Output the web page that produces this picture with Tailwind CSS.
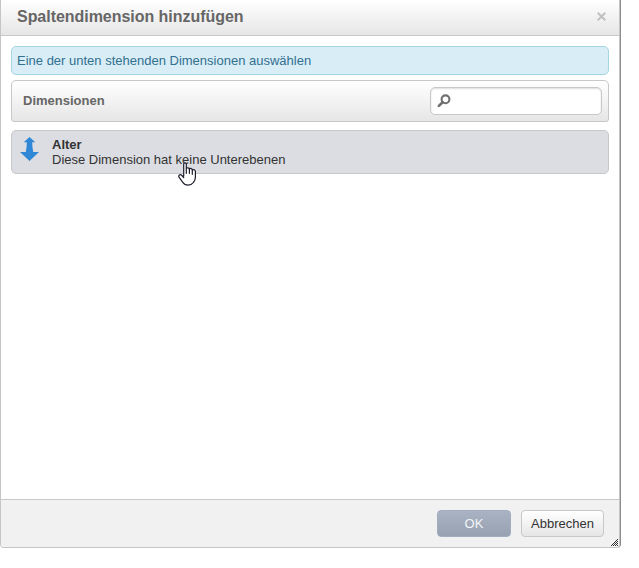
<!DOCTYPE html>
<html lang="de">
<head>
<meta charset="utf-8">
<title>Spaltendimension hinzufügen</title>
<script src="https://cdn.jsdelivr.net/npm/@tailwindcss/browser@4"></script>
</head>
<body class="h-[568px] overflow-hidden bg-white font-['Liberation_Sans',Arial,sans-serif] text-[13px] leading-[15px] text-[#333]">
<div class="h-[548px] w-[621px] rounded-b-[4px] border-r border-[#8c8c8c]">
<div class="relative flex h-[548px] w-[620px] flex-col rounded-b-[4px] border-x border-b border-[#c5c5c5] bg-white">
  <header class="flex h-9 shrink-0 items-center justify-between border-b border-[#c8c8c8] bg-linear-to-b from-white to-[#e6e6e6] pr-[13px] pl-4">
    <h1 class="pb-[1px] text-[16px] leading-[18px] font-bold tracking-[-0.04px] whitespace-nowrap text-[#666]">Spaltendimension hinzufügen</h1>
    <svg class="mb-[3px] size-[9px]" viewBox="0 0 9 9" fill="none" stroke="#c1c1c1" stroke-width="2"><path d="M.7.7l7.6 7.6M8.3.7L.7 8.3"/></svg>
  </header>
  <main class="flex-1 px-[10px] pt-[10px]">
    <div class="flex h-[29px] items-center rounded-[5px] border border-[#a3d6e1] bg-[#d9edf7] pl-[5px] text-[#31708f]">Eine der unten stehenden Dimensionen auswählen</div>
    <div class="mt-[5px] flex h-[42px] items-center justify-between rounded-t-[5px] rounded-b-[3px] border border-[#c8c8c8] bg-linear-to-b from-white to-[#e6e6e6] pr-[6px] pl-[11px]">
      <h2 class="pb-[2px] font-bold text-[#666]">Dimensionen</h2>
      <div class="flex h-7 w-[172px] items-center rounded-[5px] border border-[#c8c8c8] bg-white pl-[6px] shadow-[inset_0_1px_2px_#ddd]">
        <svg class="size-[14px]" viewBox="0 0 14 14" fill="none" stroke="#707070"><circle cx="8.5" cy="5.3" r="3.9" stroke-width="2.1"/><path d="M5.6 8.3L1.9 11.9" stroke-width="2.7" stroke-linecap="round"/></svg>
      </div>
    </div>
    <div class="mt-2 flex h-11 rounded-[5px] border border-[#c8c8c8] bg-[#dbdde2]">
      <svg class="mt-[6px] ml-2 h-6 w-[19px] shrink-0" viewBox="0 0 19 24" fill="#2f87d5"><path d="M9.5 0L15.3 5.3H12.2Q12.2 10.5 13.2 15H19L9.5 24L0 15H5.8Q6.8 10.5 6.8 5.3H3.7Z"/></svg>
      <div class="mt-[6px] ml-[13px] whitespace-nowrap">
        <div class="font-bold">Alter</div>
        <div>Diese Dimension hat keine Unterebenen</div>
      </div>
    </div>
  </main>
  <footer class="flex h-12 shrink-0 justify-end gap-[10px] rounded-b-[3px] border-t border-[#c8c8c8] bg-[#f1f1f1] pt-[10px] pr-[15px]">
    <button class="h-[27px] w-[74px] rounded-[4px] border border-[#a2adbf] bg-linear-to-b from-[#a9b3c3] to-[#97a1b1] text-[#f4f5f8]">OK</button>
    <button class="h-[27px] w-[83px] rounded-[4px] border border-[#c8c8c8] bg-linear-to-b from-white to-[#e6e6e6] whitespace-nowrap">Abbrechen</button>
  </footer>
  <svg class="absolute right-0 bottom-[1px] size-[8px]" viewBox="0 0 8 8" fill="#333" shape-rendering="crispEdges"><path d="M6 1h1v1h-1zM5 2h1v1h-1zM4 3h1v1h-1zM6 3h1v1h-1zM3 4h1v1h-1zM5 4h1v1h-1zM2 5h1v1h-1zM4 5h1v1h-1zM6 5h1v1h-1zM1 6h1v1h-1zM3 6h1v1h-1zM5 6h1v1h-1zM0 7h1v1h-1zM2 7h1v1h-1zM4 7h1v1h-1zM6 7h1v1h-1z"/></svg>
</div>
</div>
<svg class="absolute top-[162px] left-[178px] h-6 w-[19px]" viewBox="0 0 19 24" fill="white" stroke="#1b1b2b" stroke-width="1.2" stroke-linecap="round" stroke-linejoin="round"><path d="M5.7 14V2.3Q5.7 .9 7 .9Q8.3.9 8.3 2.3V6.6Q9 5.6 10.1 5.8Q11.3 5.9 11.4 7.1Q12.1 6.2 13.2 6.6Q14.3 6.9 14.3 8.1Q15.1 7.3 16.2 7.7Q17.4 8.2 17.4 9.5V15Q17.4 18.5 15.4 20.5Q13.4 23.2 10 23.2Q6.6 23.2 4.8 20.3L1.2 15.4Q.2 13.9 1.4 13Q2.6 12.2 3.9 13.5L5.7 15.5"/><path d="M8.3 7v4.3M11.4 7.3v4M14.3 8.3v4"/></svg>
</body>
</html>
